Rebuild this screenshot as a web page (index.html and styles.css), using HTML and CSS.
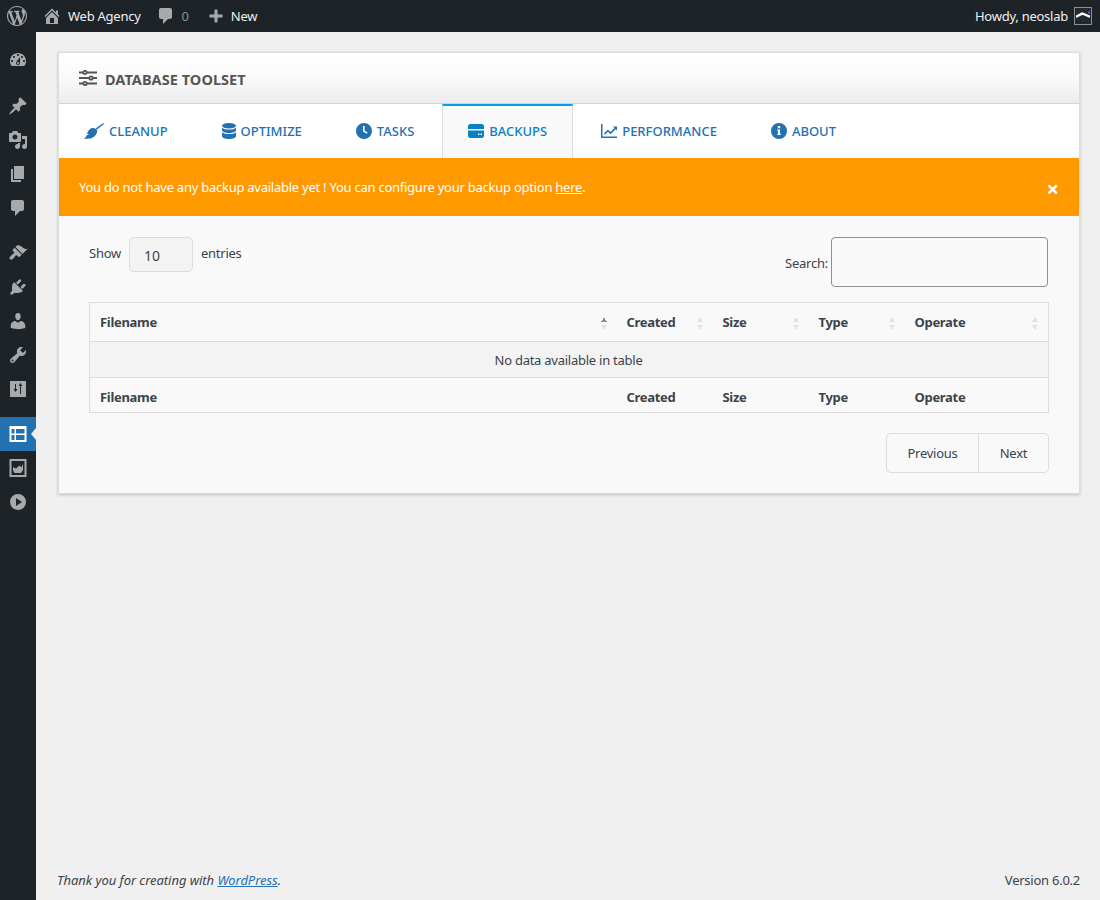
FILE: index.html
```html
<!DOCTYPE html>
<html lang="en">
<head>
    <meta charset="UTF-8">
    <meta name="viewport" content="width=device-width, initial-scale=1.0">
    <title>Database Toolset</title>
    <link rel="stylesheet" href="styles.css">
</head>
<body>

    <header class="adminbar">
        <div class="bar-left">
            <svg class="bar-logo" viewBox="0 0 20 20"><path d="M20 10c0-5.51-4.49-10-10-10C4.48 0 0 4.49 0 10c0 5.52 4.48 10 10 10 5.51 0 10-4.48 10-10zM7.78 15.37L4.37 6.22c.55-.02 1.17-.08 1.17-.08.5-.06.44-1.13-.06-1.11 0 0-1.45.11-2.37.11-.18 0-.37 0-.58-.01C4.12 2.69 6.87 1.11 10 1.11c2.33 0 4.45.87 6.05 2.34-.68-.11-1.65.39-1.65 1.58 0 .74.45 1.36.9 2.1.35.61.55 1.36.55 2.46 0 1.49-1.4 5-1.4 5l-3.03-8.37c.54-.02.82-.17.82-.17.5-.05.44-1.25-.06-1.22 0 0-1.44.12-2.38.12-.87 0-2.33-.12-2.33-.12-.5-.03-.56 1.2-.06 1.22l.92.08 1.26 3.41zM17.41 10c.24-.64.74-1.87.43-4.25.7 1.29 1.05 2.71 1.05 4.25 0 3.29-1.73 6.24-4.4 7.78.97-2.59 1.94-5.2 2.92-7.78zM6.1 18.09C3.12 16.65 1.11 13.53 1.11 10c0-1.3.23-2.48.72-3.59C3.25 10.3 4.67 14.2 6.1 18.09zm4.03-6.63l2.58 6.98c-.86.29-1.76.45-2.71.45-.79 0-1.57-.11-2.29-.33.81-2.38 1.62-4.74 2.42-7.1z"/></svg>
            <a class="bar-item bar-site">
                <svg viewBox="0 0 20 20"><path d="M16 8.5l1.53 1.53-1.06 1.06L10 4.62l-6.47 6.47-1.06-1.06L10 2.5l4 4v-2h2v4zm-6-2.46l6 5.99V18H4v-5.97zM12 17v-5H8v5h4z"/></svg>
                Web Agency
            </a>
            <a class="bar-item bar-comments">
                <svg viewBox="0 0 20 20"><path d="M5 2h9c1.1 0 2 .9 2 2v7c0 1.1-.9 2-2 2h-2l-5 5v-5H5c-1.1 0-2-.9-2-2V4c0-1.1.9-2 2-2z"/></svg>
                <span class="count">0</span>
            </a>
            <a class="bar-item bar-new">
                <svg viewBox="0 0 20 20"><path d="M17 7v3h-5v5H9v-5H4V7h5V2h3v5h5z" transform="translate(-.5 1.5)"/></svg>
                New
            </a>
        </div>
        <div class="bar-right">
            Howdy, neoslab
            <svg class="avatar" viewBox="0 0 18 18"><rect x=".5" y=".5" width="17" height="17" fill="#23282d" stroke="#8a8f94"/><path d="M2 8.500L8 5.200c2 0 4.500 2.300 8 3.300v2.200c-3.500-.7-6-2.700-8-2.700L2 11z" fill="#fff"/><rect x="14" y="4" width="2" height="3" fill="#7a2fc0"/></svg>
        </div>
    </header>

    <div class="wrap">
        <nav class="sidemenu">
            <ul class="menu-group">
                <li><svg viewBox="0 0 20 20"><path d="M3.76 16h12.48c1.1-1.37 1.76-3.11 1.76-5 0-4.42-3.58-8-8-8s-8 3.58-8 8c0 1.89.66 3.63 1.76 5zM10 4c.55 0 1 .45 1 1s-.45 1-1 1-1-.45-1-1 .45-1 1-1zM6 6c.55 0 1 .45 1 1s-.45 1-1 1-1-.45-1-1 .45-1 1-1zm8 0c.55 0 1 .45 1 1s-.45 1-1 1-1-.45-1-1 .45-1 1-1zm-5.37 5.55L12 7v6c0 1.1-.9 2-2 2s-2-.9-2-2c0-.57.24-1.08.63-1.45zM4 10c.55 0 1 .45 1 1s-.45 1-1 1-1-.45-1-1 .45-1 1-1zm12 0c.55 0 1 .45 1 1s-.45 1-1 1-1-.45-1-1 .45-1 1-1zm-5 3c0-.55-.45-1-1-1s-1 .45-1 1 .45 1 1 1 1-.45 1-1z"/></svg></li>
            </ul>
            <ul class="menu-group">
                <li><svg viewBox="0 0 20 20"><path d="M10.44 3.02l1.82-1.82 6.36 6.35-1.83 1.82c-1.05-.68-2.48-.57-3.41.36l-.75.75c-.92.93-1.04 2.35-.35 3.41l-1.83 1.82-2.41-2.41-2.8 2.79c-.42.42-3.38 2.71-3.8 2.29s1.86-3.39 2.28-3.81l2.79-2.79L4.1 9.36l1.83-1.82c1.05.69 2.48.57 3.4-.36l.75-.75c.93-.92 1.05-2.35.36-3.41z"/></svg></li>
                <li><svg viewBox="0 0 20 20"><path d="M13 11V4c0-.55-.45-1-1-1h-1.67L9 1H5L3.67 3H2c-.55 0-1 .45-1 1v7c0 .55.45 1 1 1h10c.55 0 1-.45 1-1zM7 4.500c1.380 0 2.500 1.120 2.500 2.500S8.380 9.500 7 9.500 4.500 8.380 4.500 7 5.620 4.500 7 4.500zM14 6h5v10.500c0 1.380-1.120 2.500-2.500 2.500S14 17.880 14 16.500s1.120-2.500 2.500-2.500c.17 0 .34.02.5.05V9h-3V6zm-4 8.050V13h2v3.500c0 1.380-1.120 2.500-2.500 2.500S7 17.880 7 16.500 8.120 14 9.500 14c.17 0 .34.02.5.05z"/></svg></li>
                <li><svg viewBox="0 0 20 20"><path d="M6 15V2h10v13H6zm-1 1h8v2H3V5h2v11z"/></svg></li>
                <li><svg viewBox="0 0 20 20"><path d="M5 2h9c1.100 0 2 .9 2 2v7c0 1.100-.9 2-2 2h-2l-5 5v-5H5c-1.100 0-2-.9-2-2V4c0-1.100.9-2 2-2z"/></svg></li>
            </ul>
            <ul class="menu-group">
                <li><svg viewBox="0 0 20 20"><path d="M14.480 11.060L7.410 3.990l1.500-1.500c.5-.56 2.300-.47 3.510.32 1.210.8 1.430 1.280 2.910 2.100 1.180.64 2.450 1.260 4.450.85zm-.71.71L6.700 4.700 4.930 6.470c-.39.39-.39 1.020 0 1.410l1.060 1.060c.39.39.39 1.030 0 1.420-.6.6-1.430 1.110-2.210 1.690-.35.26-.7.53-1.010.84C1.430 13.710.96 15.120 1.950 16.100c.98.99 2.390.52 3.220-.3.31-.31.58-.66.84-1.010.58-.78 1.090-1.610 1.690-2.210.39-.39 1.020-.39 1.410 0l1.060 1.060c.39.39 1.020.39 1.410 0z"/></svg></li>
                <li><svg viewBox="0 0 20 20"><path d="M13.110 4.360L9.870 7.600 8 5.730l3.240-3.240c.35-.34 1.050-.2 1.560.32.52.51.66 1.210.31 1.550zm-8 1.770l.91-1.120 9.010 9.010-1.190.84c-.71.71-2.630 1.160-3.820 1.160H6.140L4.900 17.260c-.59.59-1.540.59-2.120 0-.59-.58-.59-1.530 0-2.120l1.240-1.240v-3.880c0-1.130.4-3.190 1.090-3.890zm7.260 3.970l3.240-3.240c.34-.35 1.040-.21 1.550.31.52.51.66 1.210.31 1.550l-3.240 3.250z"/></svg></li>
                <li><svg viewBox="0 0 20 20"><path d="M10 9.250c-2.270 0-2.730-3.440-2.730-3.440C7 4.020 7.820 2 9.970 2c2.160 0 2.980 2.020 2.710 3.810 0 0-.41 3.440-2.680 3.440zm0 2.570L12.720 10c2.390 0 4.520 2.330 4.520 4.530v2.490s-3.650 1.130-7.240 1.130c-3.650 0-7.240-1.130-7.240-1.130v-2.490c0-2.250 1.940-4.480 4.470-4.480z"/></svg></li>
                <li><svg viewBox="0 0 20 20"><path d="M16.680 9.770c-1.340 1.340-3.300 1.670-4.950.99l-5.410 6.520c-.99.99-2.590.99-3.580 0s-.99-2.590 0-3.570l6.520-5.420c-.68-1.650-.35-3.610.99-4.950 1.280-1.280 3.120-1.620 4.720-1.060l-2.890 2.890 2.820 2.820 2.860-2.870c.53 1.580.18 3.390-1.080 4.650zM3.810 16.210c.4.39 1.040.39 1.430 0 .4-.4.4-1.040 0-1.430-.39-.4-1.030-.4-1.430 0-.39.39-.39 1.030 0 1.430z"/></svg></li>
                <li><svg viewBox="0 0 20 20"><path fill-rule="evenodd" d="M2 2h16v16H2zM7 5v5H5.500L7.500 13l2-3H8V5zm5 2H10.500l2 -3 2 3H13v8h-1z"/></svg></li>
            </ul>
            <ul class="menu-group">
                <li class="active"><svg viewBox="0 0 20 20"><path fill-rule="evenodd" d="M1.500 2h17v16h-17zM3.500 5v4.500h3V5zM8 5v4.500h8.500V5zM3.500 11v5h3v-5zM8 11v5h8.500v-5z"/></svg></li>
                <li><svg viewBox="0 0 20 20"><path fill-rule="evenodd" d="M1.500 1h17v18h-17zM3.500 3v14h13V3z"/><path d="M5 9l3 1.500 3.500-3 2 2L15 5.500V12L13 15H6.500L5 12.500z"/></svg></li>
                <li><svg viewBox="0 0 20 20"><path fill-rule="evenodd" d="M10 2a8 8 0 1 1 0 16 8 8 0 0 1 0-16zM8 6v8l6-4z"/></svg></li>
            </ul>
        </nav>

        <div class="content">
            <main class="panel">
                <div class="panel-head">
                    <svg class="head-icon" viewBox="0 0 18 16"><g fill="none" stroke="#555" stroke-width="1.800"><path d="M0 2.500h4M8 2.500h10M0 8h10M14 8h4M0 13.500h4M8 13.500h10"/><circle cx="6" cy="2.500" r="1.700"/><circle cx="12" cy="8" r="1.700"/><circle cx="6" cy="13.500" r="1.700"/></g></svg>
                    <h1>Database Toolset</h1>
                </div>

                <div class="tabs">
                    <a class="tab tab-first">
                        <svg class="broom" viewBox="0 0 20 16"><path d="M19.300 0l.7 1-7.300 5.800-1-1.300z"/><path d="M7.500 5.200c2.500-.7 4.500.3 5.800 2.300-.2 4-3.300 7.500-7.300 8L0 16c1.300-1 2.200-2.300 2.700-3.800L5 11.500 3 10.800c.8-2.500 2.300-4.800 4.500-5.600z"/></svg>
                        <span class="tab-label">Cleanup</span>
                    </a>
                    <a class="tab">
                        <svg class="db" viewBox="0 0 14 16"><ellipse cx="7" cy="2.800" rx="7" ry="2.800"/><path d="M0 4.800c1.500 1.300 4 1.800 7 1.800s5.500-.5 7-1.800v2.400c0 1.500-3 2.800-7 2.800s-7-1.300-7-2.800z"/><path d="M0 9.300c1.500 1.300 4 1.800 7 1.800s5.500-.5 7-1.800v3.900c0 1.500-3 2.800-7 2.800s-7-1.300-7-2.800z"/></svg>
                        <span class="tab-label">Optimize</span>
                    </a>
                    <a class="tab">
                        <svg class="round" viewBox="0 0 16 16"><path fill-rule="evenodd" d="M8 0a8 8 0 1 1 0 16A8 8 0 0 1 8 0zM7 3v5.500l3.800 2.300.8-1.200L8.600 7.800V3z"/></svg>
                        <span class="tab-label">Tasks</span>
                    </a>
                    <a class="tab tab-active">
                        <svg class="hdd" viewBox="0 0 16 14"><path d="M2.500 0h11A2.500 2.500 0 0 1 16 2.500V5H0V2.500A2.500 2.500 0 0 1 2.500 0z"/><path fill-rule="evenodd" d="M0 6.500h16v5a2.500 2.500 0 0 1-2.500 2.500h-11A2.500 2.500 0 0 1 0 11.500zM10 9.500v1.500h1.500V9.500zM12.500 9.500v1.500H14V9.500z"/></svg>
                        <span class="tab-label">Backups</span>
                    </a>
                    <a class="tab">
                        <svg class="chart" viewBox="0 0 16 14"><path d="M0 0h1.500v12.500H16V14H0z"/><path d="M3 9.500L7 5.500l2.500 2.500L13.500 4 12 2.500h4v4l-1.300-1.300L9.500 10.300 7 7.800l-3 3z"/></svg>
                        <span class="tab-label">Performance</span>
                    </a>
                    <a class="tab">
                        <svg class="round" viewBox="0 0 16 16"><path fill-rule="evenodd" d="M8 0a8 8 0 1 1 0 16A8 8 0 0 1 8 0zM6.800 3v2.200h2.400V3zM6.200 6.500v1.300h.8v3H6.200V12h3.600v-1.200H9V6.500z"/></svg>
                        <span class="tab-label">About</span>
                    </a>
                </div>

                <div class="alert">
                    <span>You do not have any backup available yet ! You can configure your backup option <a>here</a>.</span>
                    <button class="alert-close" type="button">×</button>
                </div>

                <div class="panel-body">
                    <div class="table-top">
                        <div class="length">
                            <span class="length-text">Show</span>
                            <div class="select-box">10</div>
                            <span class="length-text">entries</span>
                        </div>
                        <div class="search">
                            <label>Search:</label>
                            <input type="text">
                        </div>
                    </div>

                    <table class="data">
                        <thead>
                            <tr>
                                <th class="c-name"><div class="th-in">Filename<span class="sort on"></span></div></th>
                                <th class="c-col"><div class="th-in">Created<span class="sort"></span></div></th>
                                <th class="c-col"><div class="th-in">Size<span class="sort"></span></div></th>
                                <th class="c-col"><div class="th-in">Type<span class="sort"></span></div></th>
                                <th class="c-last"><div class="th-in">Operate<span class="sort"></span></div></th>
                            </tr>
                        </thead>
                        <tbody>
                            <tr><td colspan="5">No data available in table</td></tr>
                        </tbody>
                        <tfoot>
                            <tr>
                                <th>Filename</th>
                                <th>Created</th>
                                <th>Size</th>
                                <th>Type</th>
                                <th>Operate</th>
                            </tr>
                        </tfoot>
                    </table>

                    <div class="pager">
                        <a class="page-btn page-prev">Previous</a>
                        <a class="page-btn page-next">Next</a>
                    </div>
                </div>
            </main>

            <footer class="foot">
                <em>Thank you for creating with <a>WordPress</a>.</em>
                <span>Version 6.0.2</span>
            </footer>
        </div>
    </div>

</body>
</html>
```

FILE: styles.css
```css
* {
    box-sizing: border-box;
}
html, body {
    margin: 0;
    height: 100%;
}
body {
    font-family: "Noto Sans", "Open Sans", sans-serif;
    font-size: 13px;
    letter-spacing: -0.25px;
    color: #3c434a;
    background: #f0f0f1;
    display: flex;
    flex-direction: column;
}
ul {
    list-style: none;
    margin: 0;
    padding: 0;
}

/* top bar */
.adminbar {
    height: 32px;
    flex: none;
    background: #1d2327;
    color: #f0f0f1;
    display: flex;
    justify-content: space-between;
    align-items: center;
    padding-right: 8px;
}
.bar-left, .bar-right, .bar-item {
    display: flex;
    align-items: center;
}
.bar-logo {
    width: 20px;
    height: 20px;
    fill: #a7aaad;
    margin-left: 7px;
}
.bar-item svg {
    width: 20px;
    height: 20px;
    fill: #a7aaad;
}
.bar-site {
    margin-left: 15px;
    gap: 6px;
}
.bar-comments {
    margin-left: 15px;
    gap: 5px;
}
.count {
    color: #8c8f94;
    font-size: 13px;
    margin-left: 1px;
}
.bar-new {
    margin-left: 17px;
    gap: 5px;
}
.bar-right {
    gap: 6px;
}
.avatar {
    width: 18px;
    height: 18px;
}

/* side menu */
.wrap {
    flex: 1;
    display: flex;
    min-height: 0;
}
.sidemenu {
    width: 36px;
    flex: none;
    background: #1d2327;
    padding-top: 11px;
}
.menu-group {
    margin-bottom: 11px;
}
.menu-group:first-child {
    margin-bottom: 12px;
}
.menu-group li {
    height: 34px;
    display: flex;
    align-items: center;
    justify-content: center;
    position: relative;
}
.menu-group svg {
    width: 20px;
    height: 20px;
    fill: #a7aaad;
}
.menu-group .active {
    background: #2271b1;
}
.menu-group .active svg {
    fill: #fff;
}
.menu-group .active::after {
    content: "";
    position: absolute;
    right: 0;
    top: 50%;
    margin-top: -6px;
    border: 6px solid transparent;
    border-right-color: #f0f0f1;
    border-left-width: 0;
    border-right-width: 5px;
}

/* content */
.content {
    flex: 1;
    min-width: 0;
    padding: 20px 20px 0 22px;
    display: flex;
    flex-direction: column;
    justify-content: space-between;
}
.panel {
    border: 1px solid #dcdcde;
    background: #f9f9f9;
    box-shadow: 0 1px 3px rgba(0, 0, 0, 0.2);
}
.panel-head {
    height: 51px;
    display: flex;
    align-items: center;
    gap: 8px;
    padding-left: 20px;
    background: linear-gradient(#fff, #fafafa 50%, #ececec);
    border-bottom: 1px solid #d5d5d5;
}
.head-icon {
    width: 18px;
    height: 16px;
}
.panel-head h1 {
    margin: 2px 0 0;
    font-size: 14.5px;
    letter-spacing: 0.05px;
    font-weight: 700;
    text-transform: uppercase;
    color: #555;
}

/* tabs */
.tabs {
    display: flex;
    background: #fff;
    height: 53px;
    margin-bottom: 1px;
}
.tab {
    display: flex;
    align-items: center;
    gap: 5px;
    padding: 0 26px;
    margin-right: 2px;
    color: #2271b1;
    fill: #2271b1;
    font-weight: 500;
    font-size: 13px;
    letter-spacing: 0;
}
.tab-first {
    padding-left: 25px;
}
.tab-label {
    text-transform: uppercase;
}
.tab-active {
    background: #f9f9f9;
    border-top: 2px solid #00a0f0;
    border-left: 1px solid #dcdcde;
    border-right: 1px solid #dcdcde;
    padding: 0 25px 2px;
    color: #0a7fc2;
    fill: #0a7fc2;
    margin-bottom: -1px;
}
.broom { width: 20px; height: 16px; }
.db { width: 14px; height: 16px; }
.round { width: 16px; height: 16px; }
.hdd { width: 16px; height: 14px; }
.chart { width: 16px; height: 14px; }

/* alert */
.alert {
    height: 58px;
    background: #f90;
    color: #fff;
    padding: 0 20px;
    display: flex;
    justify-content: space-between;
    align-items: center;
}
.alert > span {
    margin-top: -1px;
}
.alert a {
    text-decoration: underline;
}
.alert-close {
    border: 0;
    background: none;
    color: #fff;
    font-family: inherit;
    font-size: 22px;
    font-weight: 700;
    padding: 0;
    line-height: 1;
    margin: 1px 0 0;
}

/* table area */
.panel-body {
    padding: 21px 30px 20px;
}
.table-top {
    display: flex;
    justify-content: space-between;
    align-items: flex-start;
    margin-bottom: 15px;
}
.length {
    display: flex;
    align-items: center;
    gap: 8px;
}
.length-text {
    margin-bottom: 4px;
}
.select-box {
    width: 64px;
    height: 35px;
    background: #f3f3f3;
    border: 1px solid #dcdcde;
    border-radius: 5px;
    padding: 8px 0 0 14px;
    font-size: 14px;
    letter-spacing: 0;
}
.search {
    display: flex;
    align-items: center;
    gap: 3px;
    margin-right: 1px;
}
.search label {
    margin-top: 2px;
}
.search input {
    width: 217px;
    height: 50px;
    background: #f9f9f9;
    border: 1px solid #8c8f94;
    border-radius: 4px;
}
.data {
    width: 960px;
    table-layout: fixed;
    border-collapse: collapse;
    border: 1px solid #dcdcde;
}
.data th, .data td {
    padding: 0 11px 0 10px;
    text-align: left;
}
.data th {
    letter-spacing: -0.3px;
}
.data thead th {
    height: 39px;
    border-bottom: 1px solid #dcdcde;
}
.data tfoot th {
    height: 35px;
    padding-top: 3px;
    border-top: 1px solid #dcdcde;
}
.data td {
    height: 36px;
    text-align: center;
    background: #f3f3f3;
}
.c-name {
    width: 527px;
}
.c-col {
    width: 96px;
}
.th-in {
    display: flex;
    justify-content: space-between;
    align-items: center;
}
.sort {
    display: block;
    width: 6px;
    height: 13px;
    margin: 2px -1px 0 0;
    background:
        linear-gradient(to top left, #e2e2e2 50%, transparent 50%) 0 0 / 3px 5px no-repeat,
        linear-gradient(to top right, #e2e2e2 50%, transparent 50%) 3px 0 / 3px 5px no-repeat,
        linear-gradient(to bottom left, #e2e2e2 50%, transparent 50%) 0 8px / 3px 5px no-repeat,
        linear-gradient(to bottom right, #e2e2e2 50%, transparent 50%) 3px 8px / 3px 5px no-repeat;
}
.sort.on {
    background:
        linear-gradient(to top left, #8f8f8f 50%, transparent 50%) 0 0 / 3px 5px no-repeat,
        linear-gradient(to top right, #8f8f8f 50%, transparent 50%) 3px 0 / 3px 5px no-repeat,
        linear-gradient(to bottom left, #e2e2e2 50%, transparent 50%) 0 8px / 3px 5px no-repeat,
        linear-gradient(to bottom right, #e2e2e2 50%, transparent 50%) 3px 8px / 3px 5px no-repeat;
}

/* pager */
.pager {
    display: flex;
    justify-content: flex-end;
    margin-top: 20px;
}
.page-btn {
    height: 40px;
    display: flex;
    align-items: center;
    justify-content: center;
    border: 1px solid #dcdcde;
}
.page-prev {
    width: 93px;
    border-radius: 5px 0 0 5px;
}
.page-next {
    width: 70px;
    border-left: 0;
    border-radius: 0 5px 5px 0;
}

/* footer */
.foot {
    display: flex;
    justify-content: space-between;
    height: 29px;
    margin-left: -1px;
}
.foot em {
    letter-spacing: -0.05px;
}
.foot a {
    color: #2271b1;
    text-decoration: underline;
}
```
